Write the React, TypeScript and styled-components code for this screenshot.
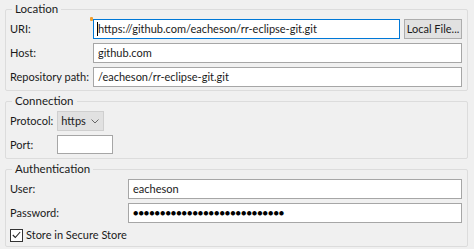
import React from "react";
import styled, { createGlobalStyle } from "styled-components";

const Global = createGlobalStyle`
  html, body { margin: 0; padding: 0; background: #f0f0f0; }
  body { font-family: Lato, "Open Sans", sans-serif; font-size: 11px; color: #1a1a1a; }
`;

const Page = styled.div`
  display: flex;
  flex-direction: column;
  gap: 2px;
  padding: 1px 6px 0 5px;
  width: 474px;
  height: 249px;
  box-sizing: border-box;
`;

const Group = styled.fieldset<{ $pb?: number }>`
  margin: 0;
  padding: 2px 5px ${(p) => p.$pb ?? 3}px 4px;
  border: 1px solid #dcdcdc;
  border-radius: 2px;
  min-width: 0;
`;

const Legend = styled.legend`
  padding: 0 3px;
  margin-left: 2px;
  line-height: 16px;
  font-size: 11.5px;
  color: #1a1a1a;
`;

const Grid = styled.div<{ $cols: string; $gap?: number }>`
  display: grid;
  grid-template-columns: ${(p) => p.$cols};
  column-gap: 4px;
  row-gap: ${(p) => p.$gap ?? 4}px;
  align-items: center;
`;

const Label = styled.span`
  white-space: nowrap;
  line-height: 16px;
`;

const FieldWrap = styled.div`
  position: relative;
  display: flex;
  min-width: 0;
`;

const Input = styled.div<{ $focus?: boolean; $w?: number; $h?: number }>`
  box-sizing: border-box;
  height: ${(p) => p.$h ?? 20}px;
  width: ${(p) => (p.$w ? `${p.$w}px` : "100%")};
  background: #fff;
  border: 1px solid ${(p) => (p.$focus ? "#0078d7" : "#a6a6a6")};
  padding: 0 4px;
  display: flex;
  align-items: center;
  white-space: nowrap;
  overflow: hidden;
  line-height: 16px;
  font-size: 11px;
`;

const Caret = styled.span`
  display: inline-block;
  width: 1px;
  height: 14px;
  background: #000;
  margin-left: -1px;
`;

const Decoration = styled.span`
  position: absolute;
  left: -3px;
  top: -2px;
  width: 3px;
  height: 4px;
  border-radius: 1px;
  background: #f0a030;
`;

const Button = styled.div`
  box-sizing: border-box;
  height: 20px;
  width: 58px;
  padding: 0 4px;
  background: #e1e1e1;
  border: 1px solid #adadad;
  display: flex;
  align-items: center;
  justify-content: center;
  white-space: nowrap;
  line-height: 16px;
`;

const Select = styled.div`
  box-sizing: border-box;
  height: 20px;
  width: 47px;
  background: #e1e1e1;
  border: 1px solid #cfcfcf;
  padding: 0 4px 0 3px;
  display: flex;
  align-items: center;
  justify-content: space-between;
  line-height: 16px;
`;

const Dots = styled.span`
  font-size: 9px;
  letter-spacing: 0px;
  line-height: 16px;
  color: #000;
`;

const CheckRow = styled.div`
  display: flex;
  align-items: center;
  gap: 3px;
  margin-top: 4px;
`;

const Box = styled.span`
  box-sizing: border-box;
  width: 13px;
  height: 13px;
  border: 1px solid #333;
  background: #fff;
  display: inline-flex;
  align-items: center;
  justify-content: center;
`;

export default function App() {
  return (
    <>
      <Global />
      <Page>
        <Group $pb={3}>
          <Legend>Location</Legend>
          <Grid $cols="auto 1fr auto">
            <Label>URI:</Label>
            <FieldWrap>
              <Decoration />
              <Input $focus>
                <Caret />
                https://github.com/eacheson/rr-eclipse-git.git
              </Input>
            </FieldWrap>
            <Button>Local File...</Button>
            <Label>Host:</Label>
            <FieldWrap style={{ gridColumn: "2 / 4" }}>
              <Input>github.com</Input>
            </FieldWrap>
            <Label>Repository path:</Label>
            <FieldWrap style={{ gridColumn: "2 / 4" }}>
              <Input>/eacheson/rr-eclipse-git.git</Input>
            </FieldWrap>
          </Grid>
        </Group>
        <Group $pb={4}>
          <Legend>Connection</Legend>
          <Grid $cols="auto 1fr" $gap={4}>
            <Label>Protocol:</Label>
            <Select>
              <span>https</span>
              <svg width="8" height="5" viewBox="0 0 8 5">
                <path d="M0.5 0.5 L4 4 L7.5 0.5" fill="none" stroke="#666" strokeWidth="1" />
              </svg>
            </Select>
            <Label>Port:</Label>
            <Input $w={56} $h={19} />
          </Grid>
        </Group>
        <Group $pb={3}>
          <Legend>Authentication</Legend>
          <Grid $cols="114px 1fr" $gap={4}>
            <Label>User:</Label>
            <Input>eacheson</Input>
            <Label>Password:</Label>
            <Input>
              <Dots>{"●".repeat(28)}</Dots>
            </Input>
          </Grid>
          <CheckRow>
            <Box>
              <svg width="9" height="8" viewBox="0 0 9 8">
                <path d="M0.8 4 L3.3 6.5 L8.2 1" fill="none" stroke="#222" strokeWidth="1.1" />
              </svg>
            </Box>
            <Label>Store in Secure Store</Label>
          </CheckRow>
        </Group>
      </Page>
    </>
  );
}
